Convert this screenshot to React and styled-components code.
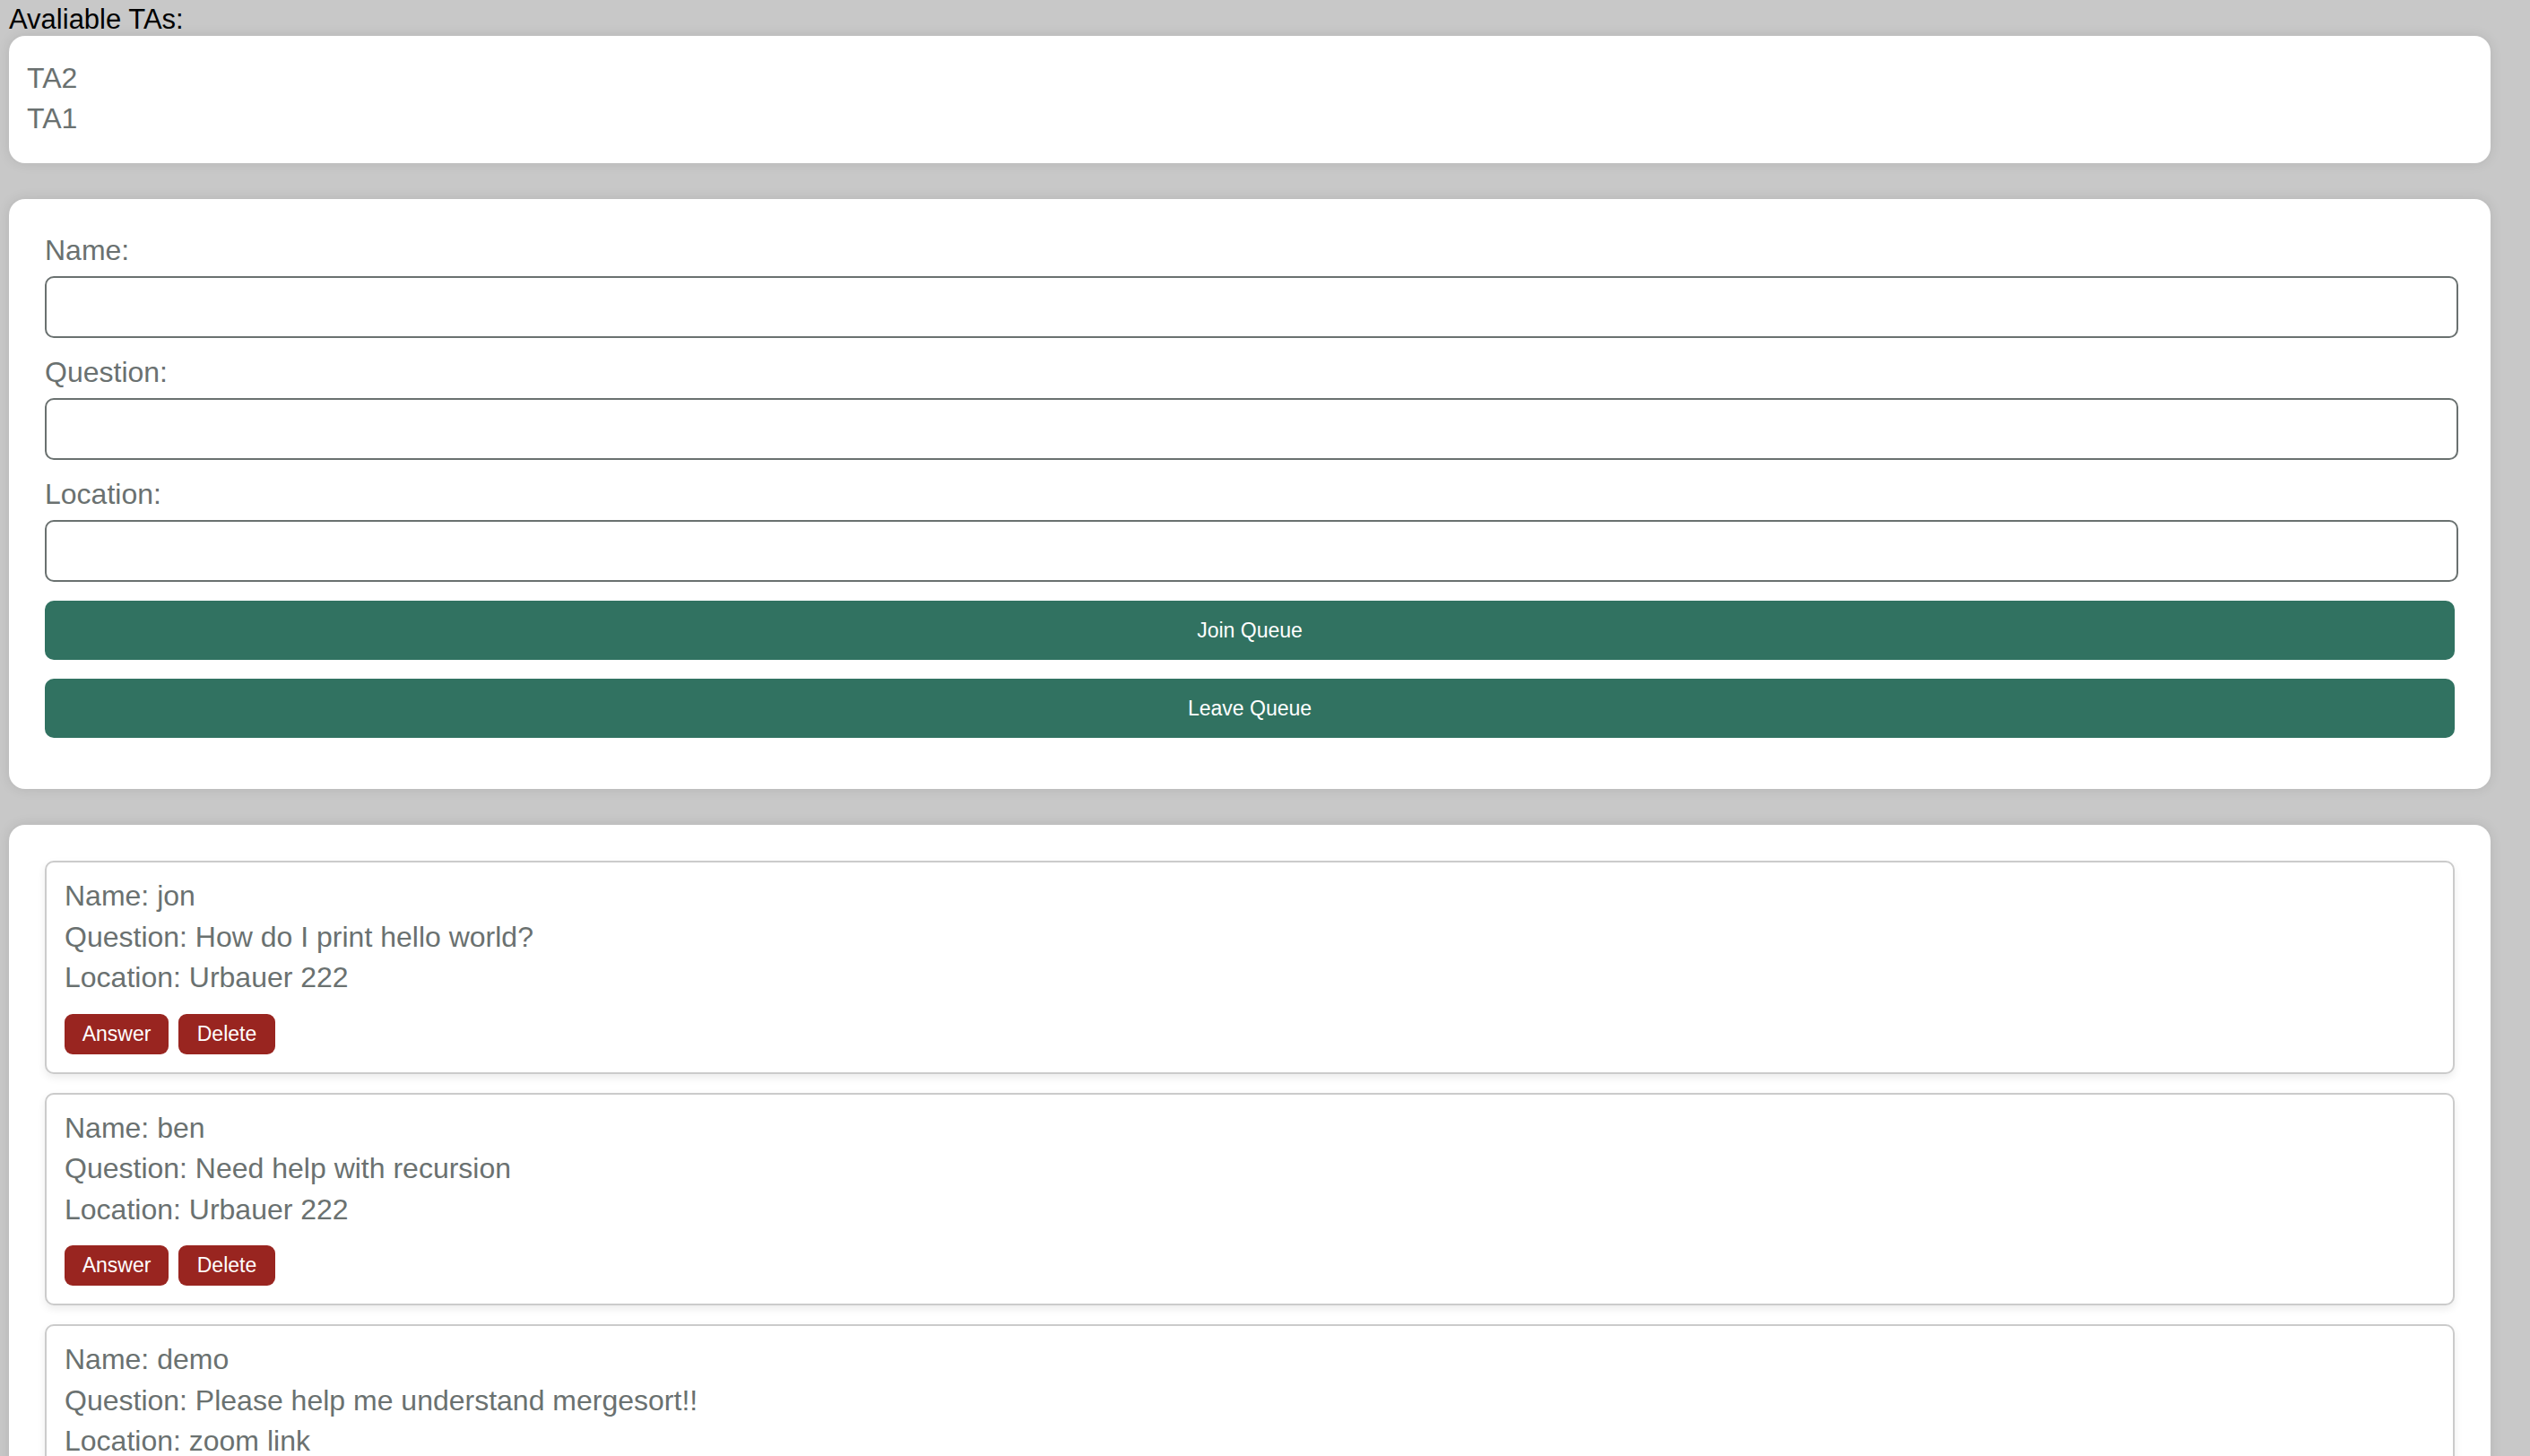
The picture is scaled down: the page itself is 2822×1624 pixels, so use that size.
import React from "react";
import styled, { createGlobalStyle } from "styled-components";

const Global = createGlobalStyle`
  html, body { margin: 0; padding: 0; background: #c8c8c8; }
  body { font-family: "Liberation Sans", Arial, sans-serif; }
  * { box-sizing: border-box; }
`;

const Page = styled.div`
  padding: 4px 44px 40px 10px;
  min-height: 1624px;
  background: #c8c8c8;
`;

const Heading = styled.div`
  font-size: 31px;
  line-height: 36px;
  color: #000;
`;

const Card = styled.section`
  background: #fff;
  border-radius: 18px;
  box-shadow: 0 0 14px rgba(0, 0, 0, 0.1);
  padding: ${(p) => p.$pad};
  margin-bottom: 40px;
`;

const TALine = styled.div`
  font-size: 32px;
  line-height: 45px;
  color: #6a7170;
`;

const Label = styled.label`
  display: block;
  font-size: 32px;
  line-height: 37px;
  color: #6a7170;
  margin-bottom: 10px;
`;

const Input = styled.input`
  display: block;
  width: calc(100% + 4px);
  height: 69px;
  border: 2px solid #6a7170;
  border-radius: 10px;
  background: #fff;
  margin: 0 0 20px 0;
  font-size: 28px;
  font-family: inherit;
  padding: 0 10px;
  outline: none;
`;

const Form = styled.div`
  display: flex;
  flex-direction: column;
`;

const Buttons = styled.div`
  display: flex;
  flex-direction: column;
  gap: 21px;
  margin-top: 1px;
`;

const WideButton = styled.button`
  height: 66px;
  width: 100%;
  border: none;
  border-radius: 10px;
  background: #317261;
  color: #fff;
  font-family: "Liberation Sans", Arial, sans-serif;
  font-size: 23px;
  cursor: pointer;
`;

const Queue = styled.div`
  display: flex;
  flex-direction: column;
  gap: 21px;
`;

const Item = styled.div`
  border: 2px solid #cbcbcb;
  border-radius: 10px;
  box-shadow: 0 4px 10px rgba(0, 0, 0, 0.08);
  padding: 15px 20px 20px 20px;
  background: #fff;
`;

const ItemLine = styled.div`
  font-size: 32px;
  line-height: 45.5px;
  color: #6a7170;
`;

const Actions = styled.div`
  display: flex;
  gap: 11px;
  margin-top: 17px;
`;

const SmallButton = styled.button`
  height: 45px;
  width: ${(p) => p.$w}px;
  border: none;
  border-radius: 9px;
  background: #992520;
  color: #fff;
  font-family: "Liberation Sans", Arial, sans-serif;
  font-size: 23px;
  padding: 0;
  cursor: pointer;
`;

const tas = ["TA2", "TA1"];
const queue = [
  { name: "jon", question: "How do I print hello world?", location: "Urbauer 222" },
  { name: "ben", question: "Need help with recursion", location: "Urbauer 222" },
  { name: "demo", question: "Please help me understand mergesort!!", location: "zoom link" },
];

export default function App() {
  return (
    <>
      <Global />
      <Page>
        <Heading>Avaliable TAs:</Heading>
        <Card $pad="25px 20px 27px 20px">
          {tas.map((t) => (
            <TALine key={t}>{t}</TALine>
          ))}
        </Card>
        <Card $pad="39px 40px 57px 40px">
          <Form>
            <Label>Name:</Label>
            <Input />
            <Label>Question:</Label>
            <Input />
            <Label>Location:</Label>
            <Input />
            <Buttons>
              <WideButton>Join Queue</WideButton>
              <WideButton>Leave Queue</WideButton>
            </Buttons>
          </Form>
        </Card>
        <Card $pad="40px 40px 40px 40px">
          <Queue>
            {queue.map((q) => (
              <Item key={q.name}>
                <ItemLine>Name: {q.name}</ItemLine>
                <ItemLine>Question: {q.question}</ItemLine>
                <ItemLine>Location: {q.location}</ItemLine>
                <Actions>
                  <SmallButton $w={116}>Answer</SmallButton>
                  <SmallButton $w={108}>Delete</SmallButton>
                </Actions>
              </Item>
            ))}
          </Queue>
        </Card>
      </Page>
    </>
  );
}
